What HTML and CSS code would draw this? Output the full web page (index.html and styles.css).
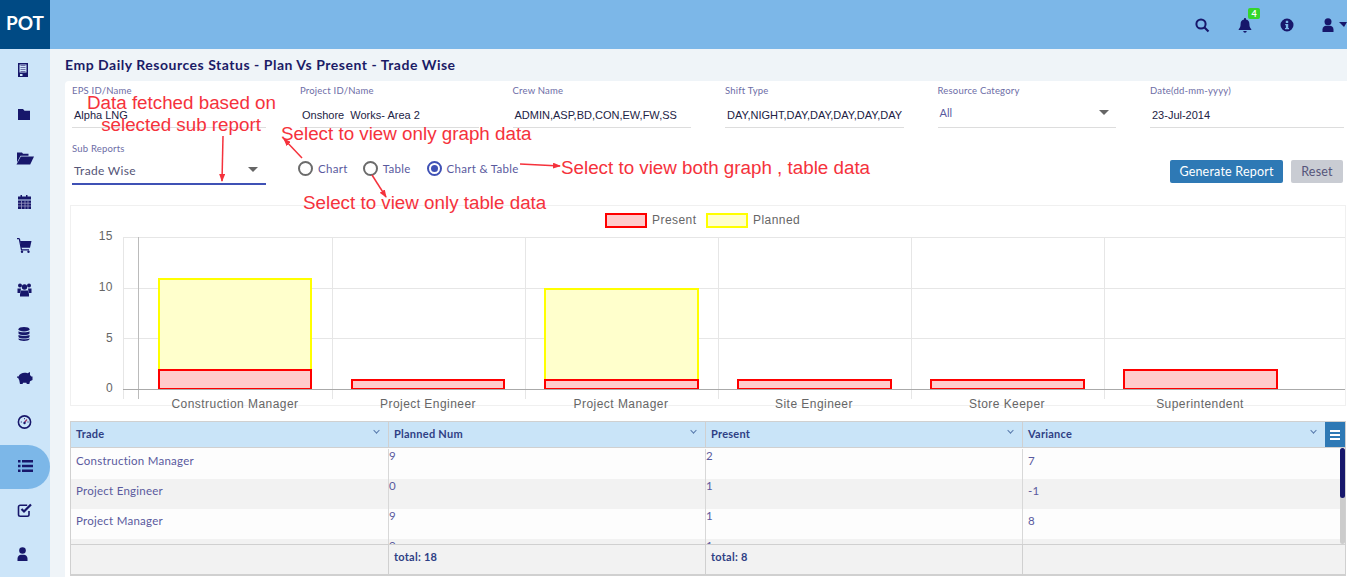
FILE: index.html
```html
<!DOCTYPE html>
<html lang="en">

<head>
    <meta charset="UTF-8">
    <title>Emp Daily Resources Status</title>
    <link rel="stylesheet" href="styles.css">
</head>

<body>
    <div class="topbar">
        <div class="logo">POT</div>
        <div class="topicons">
            <svg class="ticon" viewBox="0 0 16 16"><circle cx="7" cy="7" r="4.6" fill="none" stroke="#17176b" stroke-width="2"/><path d="M10.5 10.5L14.5 14.5" stroke="#17176b" stroke-width="2.2"/></svg>
            <div class="bell">
                <svg class="ticon" viewBox="0 0 16 16"><path d="M8 1c.6 0 1 .4 1 1v.6c2.2.5 3.4 2.2 3.4 4.4 0 3 .8 4 1.9 5.2V13H1.700v-.8C2.800 11 3.600 10 3.600 7c0-2.200 1.200-3.900 3.400-4.400V2c0-.6.400-1 1-1zM6.300 14h3.400c0 1-.8 1.700-1.700 1.700S6.300 15 6.300 14z" fill="#17176b"/></svg>
                <span class="badge">4</span>
            </div>
            <svg class="ticon info" viewBox="0 0 16 16"><path fill-rule="evenodd" d="M8 1.500a6.500 6.500 0 1 0 0 13 6.500 6.500 0 0 0 0-13zM6.800 3.800h2.400v2.200H6.800zM6.200 7h3v4h.8v1.300H6V11h.9V8.300h-.7z" fill="#17176b"/></svg>
            <svg class="ticon" viewBox="0 0 16 16"><circle cx="8" cy="4.800" r="3.500" fill="#17176b"/><path d="M2.500 15v-2.500C2.500 10 4.500 8.800 6 8.800h4c1.500 0 3.500 1.200 3.500 3.700V15z" fill="#17176b"/></svg>
            <span class="caret"></span>
        </div>
    </div>

    <div class="layout">
        <div class="sidebar">
            <div class="side-item"><svg viewBox="0 0 20 16"><path fill-rule="evenodd" d="M4 1h10v14H4zM5.500 2.500v8h7v-8zM6 12v2h2.500v-2z" fill="#17176b"/><path d="M6.500 3.500h5M6.500 5.500h5M6.500 7.500h5M6.500 9.500h5" stroke="#6f6fa8"/></svg></div>
            <div class="side-item"><svg viewBox="0 0 20 16"><path d="M4 3h5l1.500 1.800H16V14H4z" fill="#17176b"/></svg></div>
            <div class="side-item"><svg viewBox="0 0 20 16"><path d="M3 2.500h5l1 1.200h5.500v2H6.500L3 12.500z" fill="#17176b"/><path d="M6.800 6.600H20l-3.800 7.900H2.500z" fill="#17176b"/></svg></div>
            <div class="side-item"><svg viewBox="0 0 20 16"><path d="M4 2.500h2.500V1h1.500v1.500h4V1h1.500v1.500H17v3H4z" fill="#17176b"/><path d="M4 6.500h13V15H4z" fill="#17176b"/><path d="M4 9.200h13M4 12h13M7.500 6.500V15M11 6.500V15M14 6.500V15" stroke="#9a9ac4" stroke-width=".8"/></svg></div>
            <div class="side-item"><svg viewBox="0 0 20 16"><path d="M3 .6h2l1 2" stroke="#17176b" stroke-width="1.200" fill="none"/><path d="M6 3h11.500L16 9.800H7.200z" fill="#17176b"/><path d="M5.500 2l2 9.800H15" stroke="#17176b" stroke-width="1.200" fill="none"/><circle cx="8" cy="13.800" r="1.200" fill="#17176b"/><circle cx="14.500" cy="13.800" r="1.200" fill="#17176b"/></svg></div>
            <div class="side-item"><svg viewBox="0 0 20 16"><circle cx="6" cy="3.500" r="2" fill="#17176b"/><circle cx="15" cy="3.500" r="2" fill="#17176b"/><circle cx="10.500" cy="5" r="2.700" fill="#17176b"/><path d="M3.500 6.500h3.500L6.300 11H3.500zM14 6.500h3.500V11h-2.800z" fill="#17176b"/><path d="M7 8.500h7l1 3.500v2.500H6V12z" fill="#17176b"/></svg></div>
            <div class="side-item"><svg viewBox="0 0 20 16"><ellipse cx="10" cy="3.200" rx="5.500" ry="2.300" fill="#17176b"/><path d="M4.500 5.200c1 1.500 10 1.500 11 0v2.200c-1 2-10 2-11 0zM4.500 8.700c1 1.500 10 1.500 11 0v2.200c-1 2-10 2-11 0zM4.500 12.200c1 1.500 10 1.500 11 0v1c-1 2.300-10 2.300-11 0z" fill="#17176b"/></svg></div>
            <div class="side-item"><svg viewBox="0 0 20 16"><path d="M3 6.500h1.500C5.500 4 8 2.800 10.500 2.800c1 0 2 .1 3 .5l2.500-1.300v3l1.300 1.500h1.200v3.500l-2.500 1.200-.7 2.800h-2.500l-.4-1.300H9l-.4 1.300H6L5.200 10C4.500 9.200 4.200 8.500 4.200 7.800H3z" fill="#17176b"/></svg></div>
            <div class="side-item"><svg viewBox="0 0 20 16"><circle cx="10.500" cy="8" r="6.100" fill="none" stroke="#17176b" stroke-width="1.600"/><path d="M10.500 8.500l2.500-3" stroke="#a03060" stroke-width="1.200"/><circle cx="10.500" cy="9" r="1.200" fill="#17176b"/><path d="M6.800 8h1M13.500 8h1M10.500 4.200v1" stroke="#17176b"/></svg></div>
            <div class="side-item active"><svg viewBox="0 0 20 16"><path d="M4 2h2.500v2.500H4zM4 6.800h2.500v2.500H4zM4 11.500h2.500V14H4zM8 2h11v2.500H8zM8 6.800h11v2.500H8zM8 11.500h11V14H8z" fill="#17176b"/></svg></div>
            <div class="side-item"><svg viewBox="0 0 20 16"><path d="M15 9v3.500c0 1-.7 1.700-1.700 1.700H6.200c-1 0-1.700-.7-1.700-1.700V5c0-1 .7-1.700 1.700-1.700h7" fill="none" stroke="#17176b" stroke-width="1.600"/><path d="M7.500 7l2.500 2.500L17 2.500" fill="none" stroke="#17176b" stroke-width="2.200"/></svg></div>
            <div class="side-item"><svg viewBox="0 0 20 16"><circle cx="8.500" cy="4.500" r="3.300" fill="#17176b"/><path d="M3.500 15v-2.300c0-2.500 2-3.900 3.500-3.900h3c1.500 0 3.500 1.400 3.500 3.900V15z" fill="#17176b"/></svg></div>
        </div>

        <div class="main">
            <h1 class="page-title">Emp Daily Resources Status - Plan Vs Present - Trade Wise</h1>
            <div class="card">
                <div class="fields">
                    <div class="field"><label>EPS ID/Name</label><div class="value">Alpha LNG</div></div>
                    <div class="field"><label>Project ID/Name</label><div class="value">Onshore&nbsp; Works- Area 2</div></div>
                    <div class="field"><label>Crew Name</label><div class="value">ADMIN,ASP,BD,CON,EW,FW,SS</div></div>
                    <div class="field"><label>Shift Type</label><div class="value">DAY,NIGHT,DAY,DAY,DAY,DAY,DAY</div></div>
                    <div class="field"><label>Resource Category</label><div class="value select">All<span class="drop"></span></div></div>
                    <div class="field"><label>Date(dd-mm-yyyy)</label><div class="value">23-Jul-2014</div></div>
                </div>

                <div class="controls">
                    <div class="subreport">
                        <label>Sub Reports</label>
                        <div class="subvalue">Trade Wise<span class="drop"></span></div>
                    </div>
                    <div class="radios">
                        <div class="radio"><span class="dot"></span>Chart</div>
                        <div class="radio"><span class="dot"></span>Table</div>
                        <div class="radio on"><span class="dot"></span>Chart &amp; Table</div>
                    </div>
                    <div class="buttons">
                        <button class="btn primary">Generate Report</button>
                        <button class="btn muted">Reset</button>
                    </div>
                </div>

                <div class="chart">
                    <svg class="chart-svg" viewBox="70 205 1275 200">
                        <g stroke="#e6e6e6" fill="none">
                            <path d="M123 237.500H1345M123 288.500H1345M123 338.500H1345"/>
                            <path d="M123.500 237V399M332.500 237V399M525.500 237V399M718.500 237V399M911.500 237V399M1104.500 237V399"/>
                        </g>
                        <path d="M138.500 237V399" stroke="#bbb"/>
                        <g stroke-width="2">
                            <rect x="159" y="279" width="152" height="110" fill="#ffffcc" stroke="#ffff00"/>
                            <rect x="545" y="289" width="153" height="100" fill="#ffffcc" stroke="#ffff00"/>
                            <g fill="#ffcccc" stroke="#ff0000">
                                <rect x="159" y="370" width="152" height="19"/>
                                <rect x="352" y="380" width="152" height="9"/>
                                <rect x="545" y="380" width="153" height="9"/>
                                <rect x="738" y="380" width="153" height="9"/>
                                <rect x="931" y="380" width="153" height="9"/>
                                <rect x="1124" y="370" width="153" height="19"/>
                            </g>
                        </g>
                        <path d="M123 389.500H1345" stroke="#aaa"/>
                        <g class="ticks" text-anchor="end">
                            <text x="113" y="240">15</text>
                            <text x="113" y="291">10</text>
                            <text x="113" y="342">5</text>
                            <text x="113" y="392">0</text>
                        </g>
                        <g class="ticks" text-anchor="middle">
                            <text x="235" y="408">Construction Manager</text>
                            <text x="428" y="408">Project Engineer</text>
                            <text x="621" y="408">Project Manager</text>
                            <text x="814" y="408">Site Engineer</text>
                            <text x="1007" y="408">Store Keeper</text>
                            <text x="1200" y="408">Superintendent</text>
                        </g>
                        <rect x="606" y="214" width="40" height="13" fill="#ffcccc" stroke="#ff0000" stroke-width="2"/>
                        <rect x="707" y="214" width="40" height="13" fill="#ffffcc" stroke="#ffff00" stroke-width="2"/>
                        <g class="ticks">
                            <text x="652" y="224">Present</text>
                            <text x="753" y="224">Planned</text>
                        </g>
                    </svg>
                </div>

                <div class="grid">
                    <div class="grid-head">
                        <div class="hcell">Trade<span class="chev"></span></div>
                        <div class="hcell">Planned Num<span class="chev"></span></div>
                        <div class="hcell">Present<span class="chev"></span></div>
                        <div class="hcell last">Variance<span class="chev"></span><span class="menu"><i></i><i></i><i></i></span></div>
                    </div>
                    <div class="grid-body">
                        <div class="row"><div class="cell">Construction Manager</div><div class="cell top">9</div><div class="cell top">2</div><div class="cell">7</div></div>
                        <div class="row"><div class="cell">Project Engineer</div><div class="cell top">0</div><div class="cell top">1</div><div class="cell">-1</div></div>
                        <div class="row"><div class="cell">Project Manager</div><div class="cell top">9</div><div class="cell top">1</div><div class="cell">8</div></div>
                        <div class="row"><div class="cell">Site Engineer</div><div class="cell top">0</div><div class="cell top">1</div><div class="cell">-1</div></div>
                        <div class="scrollbar"><span class="thumb"></span></div>
                    </div>
                    <div class="grid-foot">
                        <div class="fcell"></div>
                        <div class="fcell">total: 18</div>
                        <div class="fcell">total: 8</div>
                        <div class="fcell"></div>
                    </div>
                </div>
            </div>
        </div>
    </div>

    <!-- red notes drawn on top of the screen -->
    <svg class="notes" viewBox="0 0 1347 577">
        <defs>
            <marker id="tip" markerUnits="userSpaceOnUse" viewBox="0 0 8 6" markerWidth="8" markerHeight="6" refX="7" refY="3" orient="auto"><path d="M0 0L8 3L0 6z" fill="#f5323c"/></marker>
        </defs>
        <g stroke="#f5323c" stroke-width="1.500">
            <path d="M223 136L222 181" marker-end="url(#tip)"/>
            <path d="M302 158L284 139" marker-end="url(#tip)"/>
            <path d="M372 175L386 197" marker-end="url(#tip)"/>
            <path d="M520 164L560 166" marker-end="url(#tip)"/>
        </g>
        <text x="181.500" y="109" text-anchor="middle">Data fetched based on</text>
        <text x="181" y="131" text-anchor="middle">selected sub report</text>
        <text x="281" y="140">Select to view only graph data</text>
        <text x="561" y="174">Select to view both graph , table data</text>
        <text x="303" y="209">Select to view only table data</text>
    </svg>
</body>

</html>
```
FILE: styles.css
```css
* {
    margin: 0;
    padding: 0;
    box-sizing: border-box;
}

html,
body {
    height: 100%;
    overflow: hidden;
}

body {
    position: relative;
    font-family: Lato, "Liberation Sans", sans-serif;
    background-color: #eff4f8;
    color: #5a5a9e;
}

/* top bar */
.topbar {
    display: flex;
    height: 49px;
    background-color: #7cb7e8;
}

.logo {
    width: 50px;
    background-color: #004a84;
    color: white;
    font-size: 19px;
    font-weight: 700;
    line-height: 45px;
    text-align: center;
}

.topicons {
    flex: 1;
    display: flex;
    justify-content: flex-end;
    align-items: center;
    gap: 26px;
    overflow: hidden;
}

.ticon {
    display: block;
    width: 16px;
    height: 16px;
}

.bell {
    position: relative;
    margin-left: 1px;
}

.info {
    margin-right: -1px;
}

.badge {
    position: absolute;
    top: -9px;
    left: 11px;
    width: 12px;
    height: 11px;
    border-radius: 2px;
    background-color: #35d62a;
    color: white;
    font-size: 9px;
    font-weight: 700;
    line-height: 11px;
    text-align: center;
}

.caret {
    width: 8px;
    height: 5px;
    margin-left: -23px;
    border-left: 5px solid transparent;
    border-right: 3px solid transparent;
    border-top: 5px solid #17176b;
}

/* page body */
.layout {
    display: flex;
    height: 528px;
}

.sidebar {
    width: 50px;
    flex-shrink: 0;
    background-color: #cce5f9;
}

.side-item {
    display: flex;
    align-items: center;
    justify-content: center;
    height: 44px;
    padding: 0 2px 2px 0;
}

.side-item svg {
    width: 20px;
    height: 16px;
}

.side-item.active {
    background-color: #7cb7e8;
    border-radius: 0 22px 22px 0;
}

.main {
    flex: 1;
    min-width: 0;
    padding: 8px 0 0 15px;
}

.page-title {
    height: 24px;
    font-size: 14px;
    font-weight: 700;
    letter-spacing: .52px;
    line-height: 16px;
    color: #1b1b66;
}

.card {
    height: 500px;
    padding: 4px 1px 0 5px;
    background-color: white;
    border-radius: 4px 0 0 0;
}

/* filter fields */
.fields {
    display: grid;
    grid-template-columns: 194px 178.5px 178.5px 178.5px 178.5px 194px;
    gap: 34px;
    padding-left: 2px;
}

label {
    display: block;
    font-size: 9.500px;
    line-height: 11px;
    letter-spacing: .2px;
    color: #6d6da6;
}

.value {
    position: relative;
    height: 32px;
    padding: 13px 0 0 2px;
    border-bottom: 1px solid #dddddd;
    font-family: "Liberation Sans", sans-serif;
    font-size: 11px;
    line-height: 13px;
    white-space: nowrap;
    color: #222244;
}

.value.select {
    padding-top: 10px;
    font-family: Lato, sans-serif;
    color: #5a5a9e;
}

.drop {
    position: absolute;
    right: 7px;
    top: 14px;
    border-left: 5px solid transparent;
    border-right: 5px solid transparent;
    border-top: 5px solid #666666;
}

/* sub report row */
.controls {
    display: flex;
    align-items: flex-start;
    margin-top: 15px;
    padding-left: 2px;
}

.subreport {
    width: 194px;
}

.subvalue {
    position: relative;
    height: 26px;
    margin-top: 5px;
    padding: 4px 0 0 2px;
    border-bottom: 2px solid #3f51b5;
    font-size: 12px;
    line-height: 15px;
    letter-spacing: .3px;
    color: #555577;
}

.subvalue .drop {
    right: 8px;
    top: 8px;
}

.radios {
    display: flex;
    gap: 15px;
    margin: 18px 0 0 32px;
}

.radio {
    display: flex;
    align-items: center;
    gap: 5px;
    font-size: 11.500px;
    letter-spacing: .3px;
    line-height: 15px;
}

.radio.on {
    margin-left: 1px;
}

.dot {
    position: relative;
    width: 15px;
    height: 15px;
    border: 2px solid #6b6b6b;
    border-radius: 50%;
}

.radio.on .dot {
    border-color: #3f51b5;
}

.radio.on .dot::after {
    content: "";
    position: absolute;
    top: 2px;
    left: 2px;
    width: 7px;
    height: 7px;
    border-radius: 50%;
    background-color: #3f51b5;
}

.buttons {
    display: flex;
    gap: 8px;
    margin: 17px 3px 0 auto;
}

.btn {
    height: 23px;
    border: 0;
    border-radius: 2px;
    font-family: Lato, sans-serif;
    font-size: 12.500px;
    letter-spacing: .2px;
}

.primary {
    width: 113px;
    background-color: #2e79b5;
    color: white;
}

.muted {
    width: 52px;
    background-color: #c9ccd3;
    color: #55557a;
}

/* chart */
.chart {
    height: 201px;
    margin-top: 20px;
    margin-bottom: 15px;
    border: 1px solid #f0f0f0;
}

.chart-svg {
    display: block;
    width: 1275px;
    height: 200px;
    margin: -1px;
    overflow: visible;
}

.ticks text {
    font-family: "Liberation Sans", sans-serif;
    font-size: 12px;
    letter-spacing: .45px;
    fill: #666666;
}

/* table */
.grid {
    border: 1px solid #d0d0d0;
    border-bottom-width: 2px;
    font-size: 11.500px;
    letter-spacing: .25px;
}

.grid-head,
.row,
.grid-foot {
    display: grid;
    grid-template-columns: 318px 317px 317px 1fr;
}

.grid-head {
    height: 26px;
    background-color: #c9e4f8;
    border-bottom: 1px solid #d0d0d0;
}

.hcell {
    position: relative;
    padding-left: 5px;
    border-right: 1px solid #d0d0d0;
    font-size: 11px;
    font-weight: 700;
    line-height: 23px;
    color: #2f3f85;
}

.hcell.last {
    border-right: 0;
}

.chev {
    position: absolute;
    top: 6px;
    right: 9px;
    width: 5px;
    height: 5px;
    border-right: 1px solid #5577aa;
    border-bottom: 1px solid #5577aa;
    transform: rotate(45deg) scale(.9);
}

.last .chev {
    right: 29px;
}

.menu {
    position: absolute;
    top: 0;
    right: 0;
    display: flex;
    flex-direction: column;
    justify-content: center;
    gap: 2px;
    width: 20px;
    height: 25px;
    padding: 0 5px;
    background-color: #2e79b5;
}

.menu i {
    display: block;
    height: 2px;
    background-color: white;
}

.grid-body {
    position: relative;
    height: 96px;
    padding-top: 1px;
    overflow: hidden;
    background-color: #fdfdfd;
}

.row {
    height: 30px;
    background-color: #fdfdfd;
}

.row:nth-child(even) {
    background-color: #f2f2f2;
}

.cell {
    padding-left: 5px;
    border-right: 1px solid #d8d8d8;
    line-height: 23px;
}

.cell:last-child {
    border-right: 0;
}

.cell.top {
    padding-left: 0;
    line-height: 14px;
}

.scrollbar {
    position: absolute;
    top: 0;
    right: 0;
    width: 5px;
    height: 96px;
    border-radius: 3px;
    background-color: #cccccc;
}

.thumb {
    display: block;
    height: 50px;
    border-radius: 3px;
    background-color: #17176b;
}

.grid-foot {
    height: 30px;
    background-color: #f2f2f2;
    border-top: 1px solid #d0d0d0;
}

.fcell {
    padding-left: 5px;
    border-right: 1px solid #d0d0d0;
    font-size: 11px;
    font-weight: 700;
    line-height: 24px;
    color: #2f3f85;
}

.fcell:last-child {
    border-right: 0;
}

/* annotations over the page */
.notes {
    position: absolute;
    top: 0;
    left: 0;
    width: 1347px;
    height: 577px;
    pointer-events: none;
}

.notes text {
    font-family: "Liberation Sans", sans-serif;
    font-size: 18.800px;
    fill: #f5323c;
}
```
